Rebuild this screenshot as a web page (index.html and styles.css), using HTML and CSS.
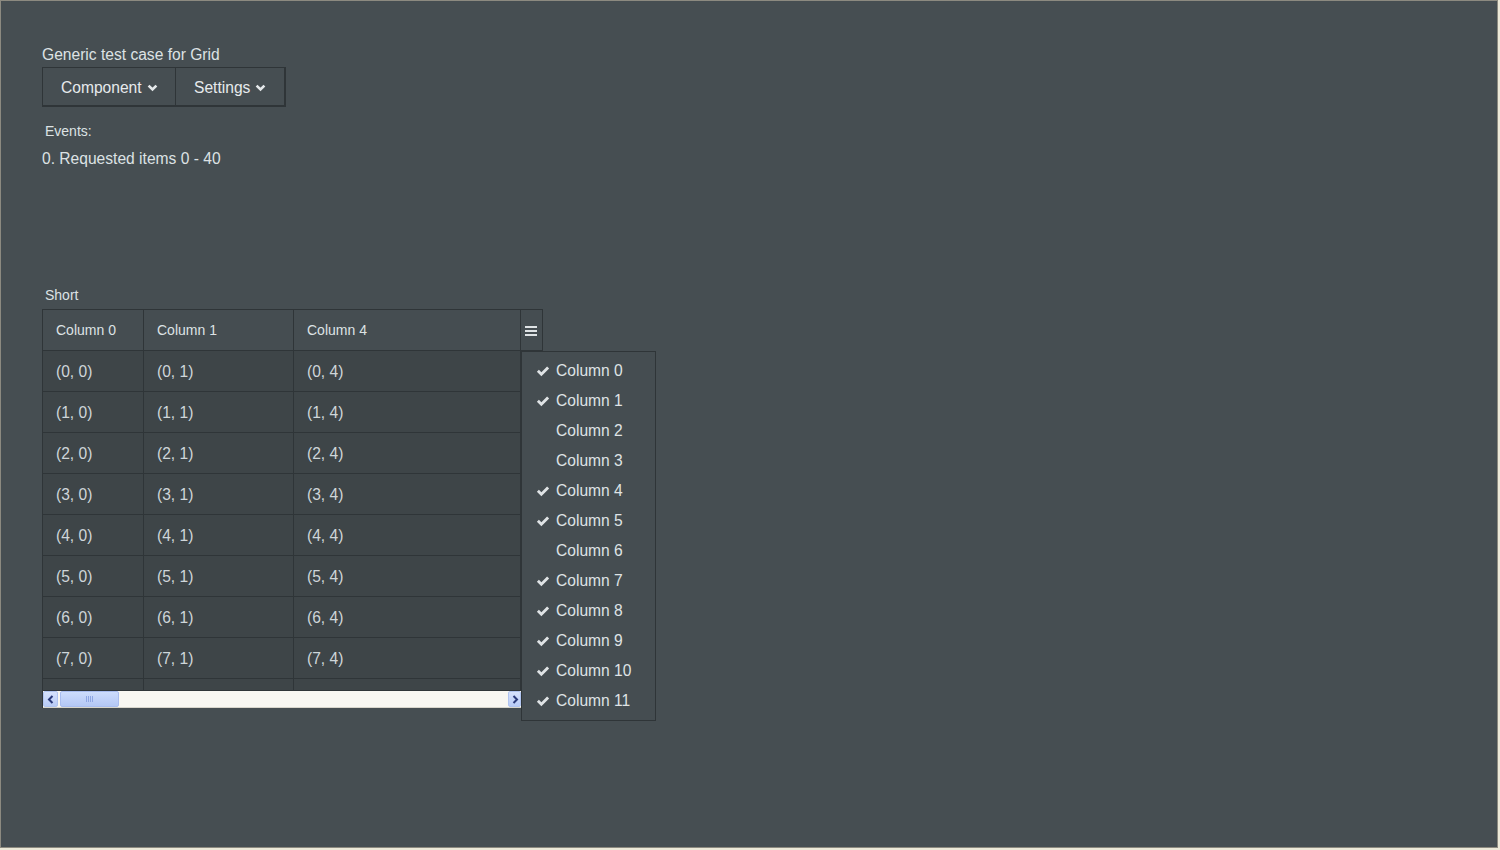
FILE: index.html
```html
<!DOCTYPE html>
<html>
<head>
<meta charset="utf-8">
<link rel="stylesheet" href="styles.css">
</head>
<body>
<div class="frame">
  <div class="title">Generic test case for Grid</div>
  <div class="menubar">
    <div class="menuitem mi-comp">Component <svg class="chev" width="11" height="8" viewBox="0 0 11 8"><polyline points="1.6,1.6 5.5,5.5 9.4,1.6" fill="none" stroke="#e4e8ea" stroke-width="2.6"/></svg></div>
    <div class="menuitem mi-set">Settings <svg class="chev" width="11" height="8" viewBox="0 0 11 8"><polyline points="1.6,1.6 5.5,5.5 9.4,1.6" fill="none" stroke="#e4e8ea" stroke-width="2.6"/></svg></div>
  </div>
  <div class="events-label">Events:</div>
  <div class="event">0. Requested items 0 - 40</div>

  <div class="grid-caption">Short</div>
  <div class="grid">
    <div class="grid-head">
      <div class="hcell c0">Column 0</div>
      <div class="hcell c1">Column 1</div>
      <div class="hcell c4">Column 4</div>
      <div class="sidebar-btn">
        <svg width="12" height="10" viewBox="0 0 12 10"><rect x="0" y="0" width="12" height="2" fill="#dfe3e5"/><rect x="0" y="4" width="12" height="2" fill="#dfe3e5"/><rect x="0" y="8" width="12" height="2" fill="#dfe3e5"/></svg>
      </div>
    </div>
    <div class="grid-body">
      <div class="row"><div class="cell c0">(0, 0)</div><div class="cell c1">(0, 1)</div><div class="cell c4">(0, 4)</div></div>
      <div class="row"><div class="cell c0">(1, 0)</div><div class="cell c1">(1, 1)</div><div class="cell c4">(1, 4)</div></div>
      <div class="row"><div class="cell c0">(2, 0)</div><div class="cell c1">(2, 1)</div><div class="cell c4">(2, 4)</div></div>
      <div class="row"><div class="cell c0">(3, 0)</div><div class="cell c1">(3, 1)</div><div class="cell c4">(3, 4)</div></div>
      <div class="row"><div class="cell c0">(4, 0)</div><div class="cell c1">(4, 1)</div><div class="cell c4">(4, 4)</div></div>
      <div class="row"><div class="cell c0">(5, 0)</div><div class="cell c1">(5, 1)</div><div class="cell c4">(5, 4)</div></div>
      <div class="row"><div class="cell c0">(6, 0)</div><div class="cell c1">(6, 1)</div><div class="cell c4">(6, 4)</div></div>
      <div class="row"><div class="cell c0">(7, 0)</div><div class="cell c1">(7, 1)</div><div class="cell c4">(7, 4)</div></div>
      <div class="row partial"><div class="cell c0"></div><div class="cell c1"></div><div class="cell c4"></div></div>
      <div class="hscroll">
        <div class="sb-btn sb-left"><svg width="8" height="9" viewBox="0 0 8 9"><polyline points="5.5,1 2,4.5 5.5,8" fill="none" stroke="#2a3a7a" stroke-width="2"/></svg></div>
        <div class="sb-thumb"><span class="grip"></span></div>
        <div class="sb-track"></div>
        <div class="sb-btn sb-right"><svg width="8" height="9" viewBox="0 0 8 9"><polyline points="2.5,1 6,4.5 2.5,8" fill="none" stroke="#2a3a7a" stroke-width="2"/></svg></div>
      </div>
    </div>

    <div class="popup">
      <div class="pitem"><span class="chk"><svg width="14" height="11" viewBox="0 0 13 10"><path d="M0.8 5.2 L2.7 3.3 L5 5.6 L10.3 0.3 L12.2 2.2 L5 9.4 Z" fill="#dfe3e5"/></svg></span>Column 0</div>
      <div class="pitem"><span class="chk"><svg width="14" height="11" viewBox="0 0 13 10"><path d="M0.8 5.2 L2.7 3.3 L5 5.6 L10.3 0.3 L12.2 2.2 L5 9.4 Z" fill="#dfe3e5"/></svg></span>Column 1</div>
      <div class="pitem"><span class="chk"></span>Column 2</div>
      <div class="pitem"><span class="chk"></span>Column 3</div>
      <div class="pitem"><span class="chk"><svg width="14" height="11" viewBox="0 0 13 10"><path d="M0.8 5.2 L2.7 3.3 L5 5.6 L10.3 0.3 L12.2 2.2 L5 9.4 Z" fill="#dfe3e5"/></svg></span>Column 4</div>
      <div class="pitem"><span class="chk"><svg width="14" height="11" viewBox="0 0 13 10"><path d="M0.8 5.2 L2.7 3.3 L5 5.6 L10.3 0.3 L12.2 2.2 L5 9.4 Z" fill="#dfe3e5"/></svg></span>Column 5</div>
      <div class="pitem"><span class="chk"></span>Column 6</div>
      <div class="pitem"><span class="chk"><svg width="14" height="11" viewBox="0 0 13 10"><path d="M0.8 5.2 L2.7 3.3 L5 5.6 L10.3 0.3 L12.2 2.2 L5 9.4 Z" fill="#dfe3e5"/></svg></span>Column 7</div>
      <div class="pitem"><span class="chk"><svg width="14" height="11" viewBox="0 0 13 10"><path d="M0.8 5.2 L2.7 3.3 L5 5.6 L10.3 0.3 L12.2 2.2 L5 9.4 Z" fill="#dfe3e5"/></svg></span>Column 8</div>
      <div class="pitem"><span class="chk"><svg width="14" height="11" viewBox="0 0 13 10"><path d="M0.8 5.2 L2.7 3.3 L5 5.6 L10.3 0.3 L12.2 2.2 L5 9.4 Z" fill="#dfe3e5"/></svg></span>Column 9</div>
      <div class="pitem"><span class="chk"><svg width="14" height="11" viewBox="0 0 13 10"><path d="M0.8 5.2 L2.7 3.3 L5 5.6 L10.3 0.3 L12.2 2.2 L5 9.4 Z" fill="#dfe3e5"/></svg></span>Column 10</div>
      <div class="pitem"><span class="chk"><svg width="14" height="11" viewBox="0 0 13 10"><path d="M0.8 5.2 L2.7 3.3 L5 5.6 L10.3 0.3 L12.2 2.2 L5 9.4 Z" fill="#dfe3e5"/></svg></span>Column 11</div>
    </div>
  </div>
</div>
</body>
</html>
```

FILE: styles.css
```css
* { box-sizing: border-box; }
html, body { margin: 0; padding: 0; }
body {
  background: #ece9d8;
  font-family: "Liberation Sans", Arial, sans-serif;
  color: #dfe3e5;
  width: 1500px;
  height: 850px;
  overflow: hidden;
}
.frame {
  width: 1498px;
  height: 848px;
  border: 1px solid #8c8a80;
  background: #464e52;
  padding: 44px 0 0 41px;
}
.title {
  font-size: 15.6px;
  line-height: 20px;
  height: 22px;
  color: #dde2e4;
}
.menubar {
  display: inline-flex;
  height: 40px;
  border: 1px solid #2f3538;
  border-right-width: 2px;
  border-bottom-width: 2px;
}
.menuitem {
  display: flex;
  align-items: center;
  font-size: 15.6px;
  color: #e6eaec;
  padding: 2px 17px 0 18px;
}
.mi-comp { width: 133px; border-right: 1px solid #2f3538; }
.mi-set { width: 108px; }
.chev { margin-left: 5px; margin-top: 1px; }
.events-label {
  font-size: 14px;
  line-height: 18px;
  margin-top: 15px;
  padding-left: 3px;
  color: #dde2e4;
}
.event {
  font-size: 15.6px;
  line-height: 20px;
  margin-top: 9px;
  color: #dde2e4;
}
.grid-caption {
  font-size: 14px;
  line-height: 18px;
  margin-top: 117px;
  padding-left: 3px;
  height: 23px;
  color: #dde2e4;
}
.grid {
  position: relative;
  width: 501px;
}
.grid-head {
  display: flex;
  height: 42px;
  border: 1px solid #2f3538;
  background: #454d51;
}
.hcell {
  font-size: 14px;
  display: flex;
  align-items: center;
  padding-left: 13px;
  border-right: 1px solid #2f3538;
  color: #dde2e4;
}
.c0 { width: 101px; }
.c1 { width: 150px; }
.c4 { width: 227px; }
.sidebar-btn {
  width: 21px;
  display: flex;
  align-items: center;
  justify-content: center;
  padding-top: 2px;
  padding-right: 1px;
}
.grid-body {
  width: 479px;
  border-left: 1px solid #2f3538;
  background: #3e4548;
}
.row {
  display: flex;
  height: 41px;
  border-bottom: 1px solid #2f3538;
}
.row.partial { height: 12px; }
.cell {
  font-size: 15.6px;
  display: flex;
  align-items: center;
  padding-left: 13px;
  padding-top: 1px;
  border-right: 1px solid #2f3538;
  color: #cfd6da;
}
.hscroll {
  display: flex;
  height: 17px;
  background: #f8f7f2;
  border-bottom: 1px solid #d8d6cc;
}
.sb-btn {
  width: 15px;
  height: 16px;
  background: linear-gradient(#d6e2fc, #b8cbf6);
  border: 1px solid #b0c4f0;
  display: flex;
  align-items: center;
  justify-content: center;
  border-radius: 2px;
}
.sb-thumb {
  width: 59px;
  height: 16px;
  margin-left: 2px;
  background: linear-gradient(#cddcfc, #b4c8f6);
  border: 1px solid #a9bdf0;
  border-radius: 2px;
  display: flex;
  align-items: center;
  justify-content: center;
}
.grip {
  width: 8px;
  height: 6px;
  background: repeating-linear-gradient(90deg, #8ea6e4 0 1px, transparent 1px 2px);
}
.sb-track { flex: 1; }
.sb-right { width: 13px; }
.popup {
  position: absolute;
  left: 479px;
  top: 42px;
  width: 135px;
  height: 370px;
  border: 1px solid #2f3538;
  background: #454d51;
  padding: 4px 0;
}
.pitem {
  height: 30px;
  display: flex;
  align-items: center;
  font-size: 15.6px;
  color: #dfe3e5;
  padding-left: 14px;
}
.chk {
  width: 20px;
  display: flex;
  align-items: center;
  padding-top: 1px;
}
```
